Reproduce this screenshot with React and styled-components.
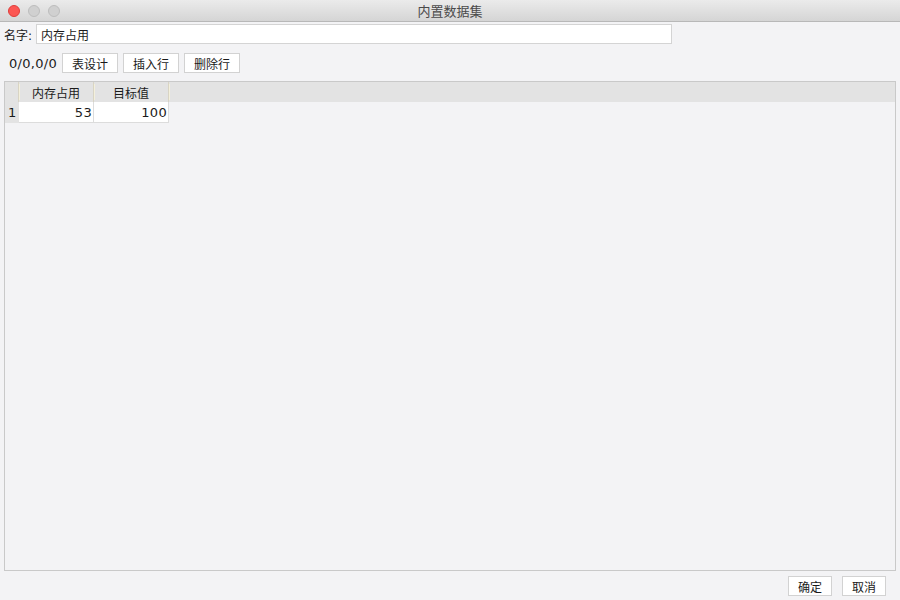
import React from "react";
import styled, { createGlobalStyle } from "styled-components";

const Global = createGlobalStyle`
  html, body { margin: 0; padding: 0; }
  body {
    width: 900px;
    height: 600px;
    overflow: hidden;
    font-family: "Lucida Grande", "DejaVu Sans", "Noto Sans CJK SC", sans-serif;
    font-size: 12px;
    color: #1a1a1a;
  }
`;

const Window = styled.div`
  width: 900px;
  height: 600px;
  background: #f3f3f5;
  display: flex;
  flex-direction: column;
`;

const TitleBar = styled.div`
  height: 21px;
  border-bottom: 1px solid #b8b8b8;
  background: linear-gradient(#ebebeb, #d5d5d5);
  display: flex;
  align-items: center;
  position: relative;
  flex-shrink: 0;
`;

const Lights = styled.div`
  display: flex;
  gap: 8px;
  padding-left: 8px;
`;

const Light = styled.span`
  width: 12px;
  height: 12px;
  border-radius: 50%;
  background: ${(p) => (p.$red ? "#fc5753" : "#d0d0d0")};
  border: 1px solid ${(p) => (p.$red ? "#df3d3a" : "#bdbdbd")};
  box-sizing: border-box;
`;

const Title = styled.div`
  position: absolute;
  left: 0;
  right: 0;
  text-align: center;
  font-size: 13px;
  color: #4a4a4a;
  pointer-events: none;
`;

const NameRow = styled.div`
  display: flex;
  align-items: center;
  padding: 2px 0 0 4px;
  gap: 4px;
  height: 20px;
`;

const Label = styled.span`
  font-size: 12px;
`;

const NameInput = styled.div`
  width: 636px;
  height: 20px;
  box-sizing: border-box;
  background: #fff;
  border: 1px solid #d4d4d4;
  display: flex;
  align-items: center;
  padding-left: 4px;
  font-size: 12px;
`;

const Toolbar = styled.div`
  display: flex;
  align-items: center;
  padding: 9px 0 0 9px;
  gap: 5px;
  height: 20px;
`;

const Counter = styled.span`
  font-size: 13px;
  letter-spacing: 0.3px;
`;

const Button = styled.div`
  height: 20px;
  width: ${(p) => p.$w || 56}px;
  box-sizing: border-box;
  border: 1px solid #d2d2d2;
  background: #fff;
  display: flex;
  align-items: center;
  justify-content: center;
  font-size: 12px;
`;

const TablePanel = styled.div`
  margin: 8px 4px 0 4px;
  flex: 1;
  border: 1px solid #c9c9c9;
  background: #f3f3f5;
`;

const HeaderRow = styled.div`
  display: flex;
  height: 20px;
  background: #e3e3e3;
`;

const HeadCell = styled.div`
  width: ${(p) => p.$w}px;
  display: flex;
  align-items: center;
  justify-content: center;
  box-sizing: border-box;
  border-right: 1px solid #d8d4c4;
  position: relative;
  font-size: 12px;
  &::after {
    content: "";
    position: absolute;
    right: -2px;
    top: 2px;
    bottom: 2px;
    width: 1px;
    background: #f4f0dc;
  }
`;

const BodyRow = styled.div`
  display: flex;
  height: 21px;
`;

const RowNum = styled.div`
  width: 14px;
  background: #e3e3e3;
  display: flex;
  align-items: center;
  padding-left: 3px;
  box-sizing: border-box;
  font-size: 13px;
`;

const Cell = styled.div`
  width: ${(p) => p.$w}px;
  background: #fff;
  box-sizing: border-box;
  border: 1px solid #dcdcdc;
  border-left: none;
  border-top: none;
  display: flex;
  align-items: center;
  justify-content: flex-end;
  padding-right: 1px;
  font-size: 13px;
  letter-spacing: 0.3px;
`;

const Footer = styled.div`
  display: flex;
  justify-content: flex-end;
  gap: 10px;
  padding: 5px 14px 4px 0;
`;

export default function App() {
  return (
    <>
      <Global />
      <Window>
        <TitleBar>
          <Lights>
            <Light $red />
            <Light />
            <Light />
          </Lights>
          <Title>内置数据集</Title>
        </TitleBar>
        <NameRow>
          <Label>名字:</Label>
          <NameInput>内存占用</NameInput>
        </NameRow>
        <Toolbar>
          <Counter>0/0,0/0</Counter>
          <Button>表设计</Button>
          <Button>插入行</Button>
          <Button>删除行</Button>
        </Toolbar>
        <TablePanel>
          <HeaderRow>
            <HeadCell $w={14} />
            <HeadCell $w={75}>内存占用</HeadCell>
            <HeadCell $w={75}>目标值</HeadCell>
          </HeaderRow>
          <BodyRow>
            <RowNum>1</RowNum>
            <Cell $w={75}>53</Cell>
            <Cell $w={75}>100</Cell>
          </BodyRow>
        </TablePanel>
        <Footer>
          <Button $w={44}>确定</Button>
          <Button $w={44}>取消</Button>
        </Footer>
      </Window>
    </>
  );
}
